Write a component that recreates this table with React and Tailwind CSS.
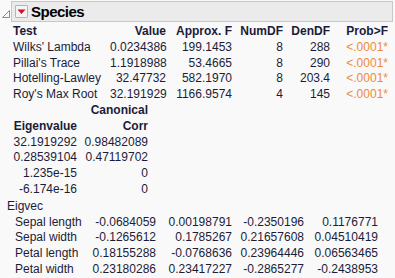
const tests = [
  ["Wilks' Lambda", "0.0234386", "199.1453", "8", "288"],
  ["Pillai's Trace", "1.1918988", "53.4665", "8", "290"],
  ["Hotelling-Lawley", "32.47732", "582.1970", "8", "203.4"],
  ["Roy's Max Root", "32.191929", "1166.9574", "4", "145"],
];

const eigen = [
  ["32.1919292", "0.98482089"],
  ["0.28539104", "0.47119702"],
  ["1.235e-15", "0"],
  ["-6.174e-16", "0"],
];

const vecs = [
  ["Sepal length", "-0.0684059", "0.00198791", "-0.2350196", "0.1176771"],
  ["Sepal width", "-0.1265612", "0.1785267", "0.21657608", "0.04510419"],
  ["Petal length", "0.18155288", "-0.0768636", "0.23964446", "0.06563465"],
  ["Petal width", "0.23180286", "0.23417227", "-0.2865277", "-0.2438953"],
];

const App = () => {
  return (
    <div className="w-[395px] h-[278px] overflow-hidden bg-[#f9f9f9] text-[12px] leading-[15.8px] text-[#1c1c38] font-['Liberation_Sans',Arial,sans-serif]">
      {/* outline header */}
      <div className="flex items-start pt-[1px]">
        <svg width="11" height="21" viewBox="0 0 11 21" className="shrink-0">
          <path d="M2.5 16.5 L9.5 9.5 L9.5 16.5 Z" fill="#fafafa" stroke="#8c8c8c" strokeWidth="1" />
        </svg>
        <div className="flex items-center h-[21px] w-[382px] border border-[#c8c8c8] bg-[#ebebeb]">
          <div className="ml-[3px] w-[13px] h-[13px] border border-[#b4b4b4] bg-[#f4f4f4] flex items-center justify-center rounded-[1px]">
            <svg width="9" height="6" viewBox="0 0 9 6">
              <path d="M0.5 0.5 L8.5 0.5 L4.5 5 Z" fill="#d0102a" />
            </svg>
          </div>
          <span className="ml-[3px] text-[15px] tracking-[-0.5px] font-bold text-black leading-[20px]">Species</span>
        </div>
      </div>

      {/* tests */}
      <div className="ml-[13px] mt-[2px] grid grid-cols-[97px_56px_66px_51px_47px_58px]">
        <div className="font-bold">Test</div>
        <div className="font-bold text-right">Value</div>
        <div className="font-bold text-right">Approx. F</div>
        <div className="font-bold text-right">NumDF</div>
        <div className="font-bold text-right">DenDF</div>
        <div className="font-bold text-right">Prob&gt;F</div>
        {tests.map((r) => (
          <div key={r[0]} className="contents">
            <div>{r[0]}</div>
            <div className="text-right">{r[1]}</div>
            <div className="text-right">{r[2]}</div>
            <div className="text-right">{r[3]}</div>
            <div className="text-right">{r[4]}</div>
            <div className="text-right text-[#ee8a3c]">&lt;.0001*</div>
          </div>
        ))}
      </div>

      {/* eigenvalues */}
      <div className="ml-[13px] grid grid-cols-[64px_71px]">
        <div />
        <div className="font-bold text-right">Canonical</div>
        <div className="font-bold text-right">Eigenvalue</div>
        <div className="font-bold text-right">Corr</div>
        {eigen.map((r) => (
          <div key={r[0]} className="contents">
            <div className="text-right">{r[0]}</div>
            <div className="text-right">{r[1]}</div>
          </div>
        ))}
      </div>

      {/* eigvec */}
      <div className="ml-[7px] mt-[1px]">Eigvec</div>
      <div className="ml-[15px] grid grid-cols-[75px_66px_76px_72px_74px]">
        {vecs.map((r) => (
          <div key={r[0]} className="contents">
            <div>{r[0]}</div>
            <div className="text-right">{r[1]}</div>
            <div className="text-right">{r[2]}</div>
            <div className="text-right">{r[3]}</div>
            <div className="text-right">{r[4]}</div>
          </div>
        ))}
      </div>
    </div>
  );
};

export default App;
